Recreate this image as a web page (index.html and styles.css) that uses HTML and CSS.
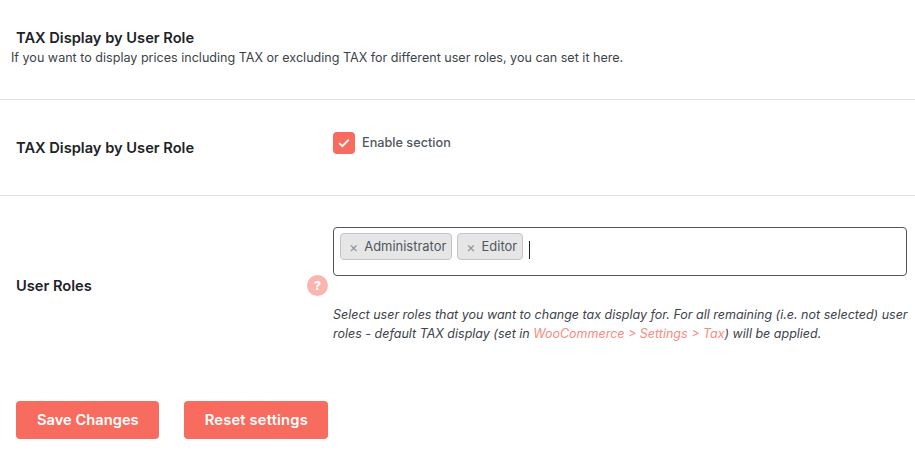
FILE: index.html
```html
<!DOCTYPE html>
<html lang="en">
<head>
<meta charset="utf-8">
<title>TAX Display by User Role</title>
<link rel="stylesheet" href="styles.css">
</head>
<body>
<section class="intro">
  <h2 class="intro-title">TAX Display by User Role</h2>
  <p class="intro-text">If you want to display prices including TAX or excluding TAX for different user roles, you can set it here.</p>
</section>
<div class="row row-enable">
  <div class="label">TAX Display by User Role</div>
  <div class="field">
    <label class="check">
      <span class="box"><svg width="12" height="10" viewBox="0 0 12 10"><path d="M1.2 5.2 4.4 8.2 10.8 1.6" fill="none" stroke="#fff" stroke-width="1.8"/></svg></span>
      <span>Enable section</span>
    </label>
  </div>
</div>
<div class="row row-roles">
  <div class="label label-roles"><span>User Roles</span><span class="help">?</span></div>
  <div class="field">
    <div class="select">
      <span class="tag"><span class="tag-x">×</span>Administrator</span>
      <span class="tag"><span class="tag-x">×</span>Editor</span>
      <span class="caret"></span>
    </div>
    <p class="note">Select user roles that you want to change tax display for. For all remaining (i.e. not selected) user roles - default TAX display (set in <a href="#">WooCommerce &gt; Settings &gt; Tax</a>) will be applied.</p>
  </div>
</div>
<div class="actions">
  <button class="btn" type="button">Save Changes</button>
  <button class="btn btn-reset" type="button">Reset settings</button>
</div>
</body>
</html>
```
FILE: styles.css
```css
* { box-sizing: border-box; }
html, body { margin: 0; padding: 0; }
body {
  width: 915px;
  height: 451px;
  overflow: hidden;
  background: #fff;
  font-family: Inter, "Liberation Sans", sans-serif;
  font-size: 13px;
  color: #50575e;
}
.intro { height: 100px; padding: 30px 0 0 11px; border-bottom: 1px solid #dfdfdf; }
.intro-title { margin: 0 0 0 5px; font-size: 14.65px; line-height: 17px; font-weight: 600; color: #1d2327; }
.intro-text { margin: 3px 0 0; font-size: 12.57px; line-height: 16px; color: #3c434a; }
.row { display: flex; padding-left: 16px; }
.row-enable { height: 96px; border-bottom: 1px solid #dfdfdf; }
.label { width: 317px; flex: none; font-size: 14.65px; line-height: 17px; font-weight: 600; color: #1d2327; }
.row-enable .label { padding-top: 40px; }
.row-enable .field { padding-top: 32px; }
.check { display: flex; align-items: flex-start; gap: 7px; color: #50575e; font-size: 12.7px; font-weight: 500; line-height: 21px; }
.box { width: 22px; height: 22px; border-radius: 4px; background: #f76c5e; display: flex; align-items: center; justify-content: center; }
.row-roles { height: 205px; }
.label-roles { display: flex; align-items: flex-start; justify-content: space-between; padding: 82px 0 0 0; }
.help { width: 21px; height: 21px; margin: -3px 5px 0 0; border-radius: 50%; background: #fcb5ae; color: #fff; font-size: 12px; font-weight: 800; line-height: 21px; text-align: center; }
.field { flex: 1; padding-right: 8px; }
.row-roles .field { padding-top: 31px; }
.select { height: 49px; border: 1px solid #50575e; border-radius: 4px; padding: 5px 6px; display: flex; align-items: flex-start; gap: 5px; }
.tag { height: 27px; padding: 0 5px 0 8px; border: 1px solid #c3c4c7; border-radius: 4px; background: #e6e6e6; font-size: 12.95px; line-height: 25px; color: #50575e; display: flex; }
.tag-x { margin-right: 6px; color: #8c8f94; font-size: 14px; }
.caret { width: 1px; height: 18px; margin: 8px 0 0 1px; background: #1d2327; }
.note { margin: 29px -8px 0 0; font-size: 12.5px; line-height: 19px; font-style: italic; color: #3c434a; }
.note a { color: #f98a80; text-decoration: none; }
.actions { display: flex; gap: 25px; padding: 0 0 0 16px; }
.btn { height: 38px; padding: 0 20px 0 21px; border: 0; border-radius: 4px; background: #f76c5e; color: #fff; font-family: inherit; font-size: 14.7px; font-weight: 600; }
.btn-reset { letter-spacing: 0.2px; }
```
